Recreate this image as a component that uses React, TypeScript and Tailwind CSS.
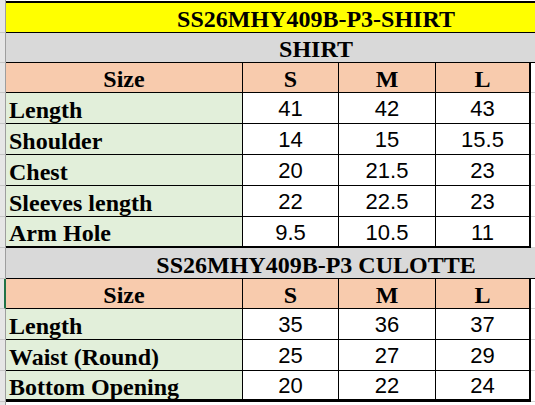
const shirtRows = [
  { label: "Length", s: "41", m: "42", l: "43" },
  { label: "Shoulder", s: "14", m: "15", l: "15.5" },
  { label: "Chest", s: "20", m: "21.5", l: "23" },
  { label: "Sleeves length", s: "22", m: "22.5", l: "23" },
  { label: "Arm Hole", s: "9.5", m: "10.5", l: "11" },
];

const culotteRows = [
  { label: "Length", s: "35", m: "36", l: "37" },
  { label: "Waist (Round)", s: "25", m: "27", l: "29" },
  { label: "Bottom Opening", s: "20", m: "22", l: "24" },
];

const serif = "font-['Liberation_Serif',serif] font-bold text-[24px] leading-none text-black";
const sans = "font-['Liberation_Sans',Arial,sans-serif] text-[22px] leading-none text-black";

function Gutter({ h, selected = false }: { h: string; selected?: boolean }) {
  return (
    <div
      className={`${h} w-[6px] shrink-0 bg-[#e6e6e6] border-b border-[#c6c6c6] border-r ${
        selected ? "border-r-2 border-r-[#217346]" : "border-r-[#9e9e9e]"
      }`}
    />
  );
}

function MergedRow({ text, bg, h, border }: { text: string; bg: string; h: string; border: string }) {
  return (
    <div className="flex">
      <Gutter h={h} />
      <div className={`${h} w-[620px] shrink-0 ${bg} ${border} flex items-center justify-center pt-[3px]`}>
        <span className={serif}>{text}</span>
      </div>
    </div>
  );
}

function HeaderRow({ h, selected = false }: { h: string; selected?: boolean }) {
  return (
    <div className="flex">
      <Gutter h={h} selected={selected} />
      <div className={`${h} w-[237px] shrink-0 bg-[#f8cbad] border-r border-b border-black flex items-center justify-center pt-[3px]`}>
        <span className={serif}>Size</span>
      </div>
      {["S", "M", "L"].map((s, i) => (
        <div
          key={s}
          className={`${h} ${i === 0 ? "w-[96px]" : i === 1 ? "w-[97px]" : "w-[95px]"} shrink-0 bg-[#f8cbad] border-b border-black ${
            i === 2 ? "border-r-2" : "border-r"
          } flex items-center justify-center pt-[3px]`}
        >
          <span className={serif}>{s}</span>
        </div>
      ))}
      <div className={`${h} flex-1 bg-white border-b border-[#d4d4d4]`} />
    </div>
  );
}

function DataRow({
  label,
  values,
  bottom = "border-b border-black",
}: {
  label: string;
  values: string[];
  bottom?: string;
}) {
  return (
    <div className="flex">
      <Gutter h="h-[31px]" />
      <div className={`h-[31px] w-[237px] shrink-0 bg-[#e2efda] border-r border-black ${bottom} flex items-center pl-[3px] pt-[3px]`}>
        <span className={serif}>{label}</span>
      </div>
      {values.map((v, i) => (
        <div
          key={i}
          className={`h-[31px] ${i === 0 ? "w-[96px]" : i === 1 ? "w-[97px]" : "w-[95px]"} shrink-0 bg-white ${bottom} ${
            i === 2 ? "border-r-2" : "border-r"
          } border-black flex items-center justify-center pt-[2px]`}
        >
          <span className={sans}>{v}</span>
        </div>
      ))}
      <div className="h-[31px] flex-1 bg-white border-b border-[#d4d4d4]" />
    </div>
  );
}

export default function App() {
  return (
    <div className="w-[535px] h-[405px] overflow-hidden bg-white">
      <div className="flex">
        <div className="h-[1px] w-[6px] bg-[#e6e6e6] border-r border-[#9e9e9e]" />
      </div>
      <div className="flex">
        <div className="h-[2px] w-[6px] shrink-0 bg-[#e6e6e6] border-r border-[#9e9e9e]" />
        <div className="h-[2px] w-[620px] shrink-0 bg-black" />
      </div>
      <MergedRow text="SS26MHY409B-P3-SHIRT" bg="bg-[#ffff00]" h="h-[30px]" border="border-b border-black" />
      <MergedRow text="SHIRT" bg="bg-[#d9d9d9]" h="h-[30px]" border="border-b border-black" />
      <HeaderRow h="h-[30px]" />
      {shirtRows.map((r, i) => (
        <DataRow
          key={r.label}
          label={r.label}
          values={[r.s, r.m, r.l]}
          bottom={i === shirtRows.length - 1 ? "border-b-2 border-b-black" : "border-b border-b-black"}
        />
      ))}
      <MergedRow text="SS26MHY409B-P3 CULOTTE" bg="bg-[#d9d9d9]" h="h-[31px]" border="border-b border-black" />
      <HeaderRow h="h-[30px]" selected />
      {culotteRows.map((r, i) => (
        <DataRow
          key={r.label}
          label={r.label}
          values={[r.s, r.m, r.l]}
          bottom={i === culotteRows.length - 1 ? "border-b-[3px] border-b-black" : "border-b border-b-black"}
        />
      ))}
      <div className="flex">
        <div className="h-[4px] w-[6px] shrink-0 bg-[#e6e6e6] border-r border-[#9e9e9e]" />
      </div>
    </div>
  );
}
